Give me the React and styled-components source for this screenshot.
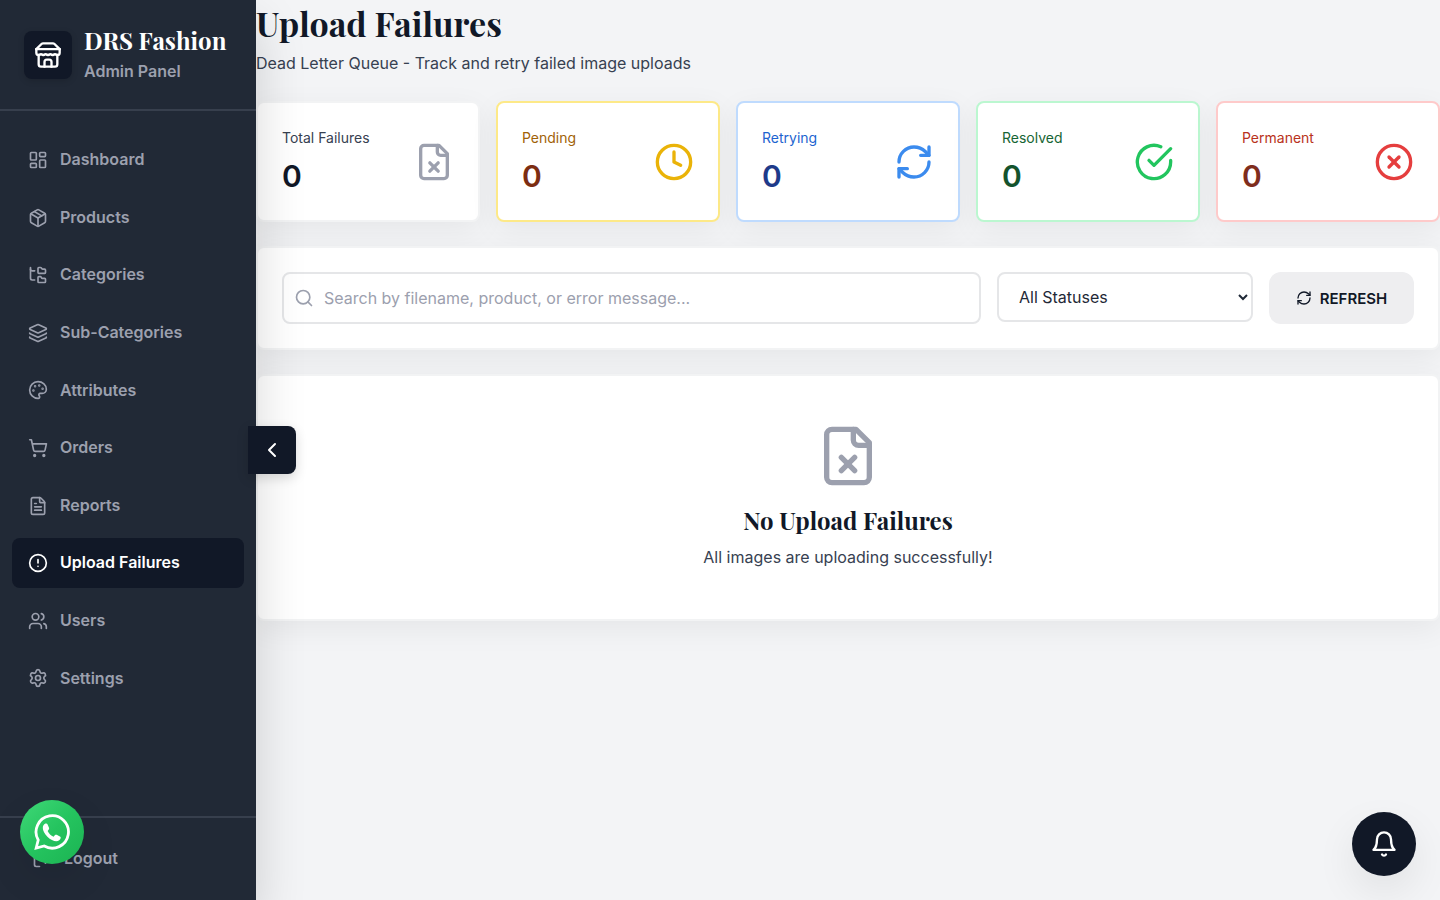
import React, { useState } from 'react';
import styled, { createGlobalStyle } from 'styled-components';
import {
    LayoutDashboard,
    Package,
    FolderTree,
    Layers,
    Palette,
    ShoppingCart,
    FileText,
    CircleAlert,
    Users,
    Settings,
    LogOut,
    ChevronLeft,
    Clock,
    RefreshCw,
    CircleX,
    Search
} from 'lucide-react';

const GlobalStyle = createGlobalStyle`
    * {
        box-sizing: border-box;
    }

    body {
        margin: 0;
        background: #f3f4f6;
        color: #111827;
        font-family: Inter, "Liberation Sans", sans-serif;
        font-size: 16px;
        line-height: 1.6;
    }

    h1, h2, p {
        margin: 0;
    }

    button, input, select {
        font-family: inherit;
    }

    svg {
        flex-shrink: 0;
    }
`;

const serif = '"Playfair Display", "Liberation Serif", serif';

const Shell = styled.div`
    display: flex;
    min-height: 100vh;
`;

const Sidebar = styled.aside`
    position: sticky;
    top: 0;
    z-index: 2;
    display: flex;
    flex-direction: column;
    flex: 0 0 256px;
    height: 100vh;
    background: #212936;
    color: #9ca0ae;
    box-shadow: 0 24px 48px rgba(0, 0, 0, .16);
`;

const Brand = styled.div`
    display: flex;
    align-items: center;
    gap: 12px;
    padding: 24px;
    border-bottom: 2px solid #373f4d;
`;

const BrandLogo = styled.div`
    display: flex;
    align-items: center;
    justify-content: center;
    width: 48px;
    height: 48px;
    border-radius: 8px;
    background: #111827;
    color: #fff;
    box-shadow: 0 2px 6px rgba(0, 0, 0, .15);
`;

const BrandName = styled.h2`
    margin-bottom: 2px;
    font-family: ${serif};
    font-size: 24px;
    font-weight: 700;
    line-height: 32px;
    white-space: nowrap;
    color: #fff;
`;

const BrandNote = styled.p`
    font-weight: 600;
    line-height: 1.7;
`;

const Nav = styled.nav`
    display: flex;
    flex-direction: column;
    flex: 1;
    gap: 8px;
    padding: 24px 12px;
`;

const NavLink = styled.a`
    display: flex;
    align-items: center;
    gap: 12px;
    padding: 12px 16px;
    border-radius: 8px;
    background: ${props => props.$active ? '#111827' : 'transparent'};
    color: ${props => props.$active ? '#fff' : 'inherit'};
    font-weight: 600;
    text-decoration: none;
`;

const SidebarFooter = styled.div`
    padding: 16px;
    border-top: 2px solid #373f4d;
`;

const LogoutButton = styled.button`
    display: flex;
    align-items: center;
    gap: 12px;
    width: 100%;
    padding: 12px 16px;
    border: none;
    background: none;
    color: inherit;
    font-size: 16px;
    font-weight: 600;
    line-height: 1.6;
`;

const CollapseButton = styled.button`
    position: absolute;
    top: calc(50% - 24px);
    right: -40px;
    display: flex;
    align-items: center;
    justify-content: center;
    width: 48px;
    height: 48px;
    padding: 0;
    border: none;
    border-radius: 0 8px 8px 0;
    background: #111827;
    color: #fff;
    box-shadow: 0 4px 12px rgba(0, 0, 0, .15);
`;

const Main = styled.main`
    display: flex;
    flex-direction: column;
    flex: 1;
    gap: 24px;
    min-width: 0;
`;

const PageTitle = styled.h1`
    margin-bottom: 4px;
    font-family: ${serif};
    font-size: 34px;
    font-weight: 700;
    line-height: 46px;
`;

const Text = styled.p`
    color: #374151;
    line-height: 1.7;
`;

const Stats = styled.section`
    display: grid;
    grid-template-columns: repeat(5, 1fr);
    gap: 16px;
`;

const Card = styled.div`
    padding: 24px;
    border: 2px solid ${props => props.$border || '#f2f3f4'};
    border-radius: 8px;
    background: #fff;
    box-shadow: 0 8px 30px rgba(0, 0, 0, .06);
`;

const StatCard = styled(Card)`
    display: flex;
    align-items: center;
    justify-content: space-between;
`;

const StatLabel = styled.p`
    margin-bottom: 8px;
    color: ${props => props.$color};
    font-size: 14px;
    line-height: 22px;
`;

const StatValue = styled.p`
    color: ${props => props.$color};
    font-size: 30px;
    font-weight: 600;
    line-height: 39px;
`;

const Filters = styled(Card)`
    display: flex;
    align-items: flex-start;
    gap: 16px;
`;

const SearchField = styled.label`
    display: flex;
    align-items: center;
    flex: 1;
    gap: 10px;
    height: 52px;
    padding: 0 10px;
    border: 2px solid #e5e6e8;
    border-radius: 8px;
    background: #fff;
    color: #9ca0ae;
`;

const SearchInput = styled.input`
    flex: 1;
    min-width: 0;
    padding: 0;
    border: none;
    outline: none;
    background: none;
    color: #111827;
    font-size: 16px;

    &::placeholder {
        color: #9ca0ae;
    }
`;

const StatusSelect = styled.select`
    width: 256px;
    height: 50px;
    padding: 0 0 0 16px;
    border: 2px solid #e5e6e8;
    border-radius: 8px;
    background: #fff;
    color: #1f2937;
    font-size: 16px;
`;

const RefreshButton = styled.button`
    display: flex;
    align-items: center;
    justify-content: center;
    gap: 8px;
    min-width: 145px;
    height: 52px;
    padding: 0 24px;
    border: none;
    border-radius: 12px;
    background: #eeeef0;
    color: #111827;
    font-size: 15px;
    font-weight: 600;
    text-transform: uppercase;
`;

const EmptyState = styled(Card)`
    display: flex;
    flex-direction: column;
    align-items: center;
    padding: 48px;
    color: #9ca0ae;
`;

const EmptyTitle = styled.h2`
    margin: 16px 0 8px;
    color: #111827;
    font-family: ${serif};
    font-size: 24px;
    font-weight: 700;
    line-height: 32px;
`;

const FloatingButton = styled.button`
    position: fixed;
    right: 24px;
    bottom: 24px;
    z-index: 3;
    display: flex;
    align-items: center;
    justify-content: center;
    width: 64px;
    height: 64px;
    padding: 0;
    border: none;
    border-radius: 50%;
    background: #111827;
    color: #fff;
    box-shadow: 0 16px 40px rgba(0, 0, 0, .08);
`;

const WhatsAppLink = styled(FloatingButton)`
    right: auto;
    bottom: 36px;
    left: 20px;
    background: linear-gradient(135deg, #3fd877, #25c45f 50%, #1bb352);
`;

const Icon = ({ size, color = 'currentColor', children }) => (
    <svg width={size} height={size} viewBox="0 0 24 24" fill="none" stroke={color}
        strokeWidth="2" strokeLinecap="round" strokeLinejoin="round" aria-hidden="true">
        {children}
    </svg>
)

const StoreIcon = (props) => (
    <Icon {...props}>
        <path d="m2 7 4.41-4.41A2 2 0 0 1 7.83 2h8.34a2 2 0 0 1 1.42.59L22 7" />
        <path d="M4 12v8a2 2 0 0 0 2 2h12a2 2 0 0 0 2-2v-8" />
        <path d="M15 22v-4a2 2 0 0 0-2-2h-2a2 2 0 0 0-2 2v4" />
        <path d="M2 7h20" />
        <path d="M22 7v3a2 2 0 0 1-2 2a2.7 2.7 0 0 1-1.59-.63.7.7 0 0 0-.82 0A2.7 2.7 0 0 1 16 12a2.7 2.7 0 0 1-1.59-.63.7.7 0 0 0-.82 0A2.7 2.7 0 0 1 12 12a2.7 2.7 0 0 1-1.59-.63.7.7 0 0 0-.82 0A2.7 2.7 0 0 1 8 12a2.7 2.7 0 0 1-1.59-.63.7.7 0 0 0-.82 0A2.7 2.7 0 0 1 4 12a2 2 0 0 1-2-2V7" />
    </Icon>
)

const FileXIcon = (props) => (
    <Icon {...props}>
        <path d="M15 2H6a2 2 0 0 0-2 2v16a2 2 0 0 0 2 2h12a2 2 0 0 0 2-2V7Z" />
        <path d="M14 2v4a2 2 0 0 0 2 2h4" />
        <path d="m14.5 12.5-5 5" />
        <path d="m9.5 12.5 5 5" />
    </Icon>
)

const CheckIcon = (props) => (
    <Icon {...props}>
        <path d="M22 11.08V12a10 10 0 1 1-5.93-9.14" />
        <path d="m9 11 3 3L22 4" />
    </Icon>
)

const BellIcon = (props) => (
    <Icon {...props}>
        <path d="M6 8a6 6 0 0 1 12 0c0 7 3 9 3 9H3s3-2 3-9" />
        <path d="M10.3 21a1.94 1.94 0 0 0 3.4 0" />
    </Icon>
)

const WhatsAppIcon = () => (
    <svg width="36" height="36" viewBox="0 0 36 36" fill="none" aria-hidden="true">
        <path d="M2.2 34l2-8A16.2 16.2 0 1 1 10.2 32Z" stroke="currentColor" strokeWidth="2.8" />
        <path
            d="M11.4 9.6c.9-.5 1.8-.1 2.2.8l1.4 3.3c.3.8.1 1.4-.4 2l-1 1.2c1.3 2.6 3.3 4.6 6 5.8l1.4-1.6c.5-.5 1-.6 1.7-.3l3.2 1.6c.7.4.9.8.8 1.6-.3 2-2.2 3.2-4.4 3.2-2.6 0-6-1.7-8.9-4.5-2.8-2.8-4.6-6-4.6-8.6 0-2 .9-3.7 2.6-4.5z"
            fill="currentColor"
        />
    </svg>
)

const navItems = [
    { label: 'Dashboard', icon: LayoutDashboard },
    { label: 'Products', icon: Package },
    { label: 'Categories', icon: FolderTree },
    { label: 'Sub-Categories', icon: Layers },
    { label: 'Attributes', icon: Palette },
    { label: 'Orders', icon: ShoppingCart },
    { label: 'Reports', icon: FileText },
    { label: 'Upload Failures', icon: CircleAlert, active: true },
    { label: 'Users', icon: Users },
    { label: 'Settings', icon: Settings }
];

const stats = [
    { label: 'Total Failures', icon: FileXIcon, text: '#374151', value: '#111827', accent: '#9ca0ae' },
    { label: 'Pending', icon: Clock, text: '#a16207', value: '#7c2d12', accent: '#eab308', border: '#fde988' },
    { label: 'Retrying', icon: RefreshCw, text: '#1d64d0', value: '#1e3a8a', accent: '#3b8bee', border: '#bfdbfe' },
    { label: 'Resolved', icon: CheckIcon, text: '#166534', value: '#14532d', accent: '#22c55e', border: '#bbf7d0' },
    { label: 'Permanent', icon: CircleX, text: '#b93220', value: '#7f2d1d', accent: '#e53e3e', border: '#fecaca' }
];

const App = () => {
    const [query, setQuery] = useState('');
    const [status, setStatus] = useState('all');

    return (
        <>
            <GlobalStyle />
            <Shell>
                <Sidebar>
                    <Brand>
                        <BrandLogo><StoreIcon size={28} /></BrandLogo>
                        <div>
                            <BrandName>DRS Fashion</BrandName>
                            <BrandNote>Admin Panel</BrandNote>
                        </div>
                    </Brand>
                    <Nav>
                        {navItems.map(({ label, icon: NavIcon, active }) => (
                            <NavLink key={label} href="#" $active={active}>
                                <NavIcon size={20} />
                                {label}
                            </NavLink>
                        ))}
                    </Nav>
                    <SidebarFooter>
                        <LogoutButton type="button">
                            <LogOut size={20} />
                            Logout
                        </LogoutButton>
                    </SidebarFooter>
                    <CollapseButton type="button" aria-label="Collapse sidebar">
                        <ChevronLeft size={24} />
                    </CollapseButton>
                </Sidebar>
                <Main>
                    <header>
                        <PageTitle>Upload Failures</PageTitle>
                        <Text>Dead Letter Queue - Track and retry failed image uploads</Text>
                    </header>
                    <Stats>
                        {stats.map(({ label, icon: StatIcon, text, value, accent, border }) => (
                            <StatCard key={label} $border={border}>
                                <div>
                                    <StatLabel $color={text}>{label}</StatLabel>
                                    <StatValue $color={value}>0</StatValue>
                                </div>
                                <StatIcon size={40} color={accent} />
                            </StatCard>
                        ))}
                    </Stats>
                    <Filters>
                        <SearchField>
                            <Search size={20} />
                            <SearchInput
                                type="text"
                                aria-label="Search failures"
                                placeholder="Search by filename, product, or error message..."
                                value={query}
                                onChange={(e) => setQuery(e.target.value)}
                            />
                        </SearchField>
                        <StatusSelect aria-label="Status" value={status} onChange={(e) => setStatus(e.target.value)}>
                            <option value="all">All Statuses</option>
                            <option value="pending">Pending</option>
                            <option value="retrying">Retrying</option>
                            <option value="resolved">Resolved</option>
                            <option value="permanent">Permanent</option>
                        </StatusSelect>
                        <RefreshButton type="button">
                            <RefreshCw size={16} />
                            Refresh
                        </RefreshButton>
                    </Filters>
                    <EmptyState>
                        <FileXIcon size={64} />
                        <EmptyTitle>No Upload Failures</EmptyTitle>
                        <Text>All images are uploading successfully!</Text>
                    </EmptyState>
                </Main>
            </Shell>
            <WhatsAppLink as="a" href="#" aria-label="Chat on WhatsApp">
                <WhatsAppIcon />
            </WhatsAppLink>
            <FloatingButton type="button" aria-label="Notifications">
                <BellIcon size={28} />
            </FloatingButton>
        </>
    )
}

export default App;
